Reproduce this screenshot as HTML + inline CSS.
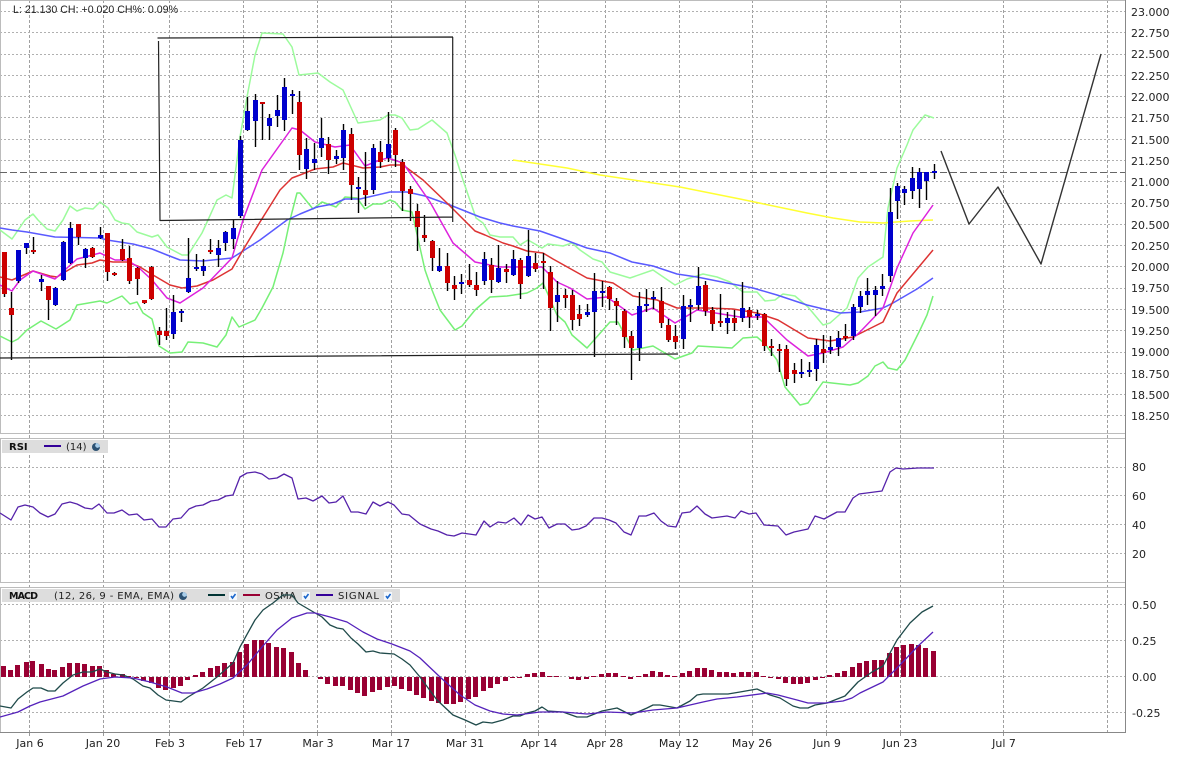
<!DOCTYPE html>
<html><head><meta charset="utf-8"><title>Chart</title>
<style>
html,body{margin:0;padding:0;background:#fff;width:1178px;height:757px;overflow:hidden}
svg{display:block}
text{font-family:"DejaVu Sans",sans-serif;font-size:11px;fill:#222}
.l{fill:none;stroke-linejoin:round}
</style></head><body>
<svg width="1178" height="757" viewBox="0 0 1178 757" xmlns="http://www.w3.org/2000/svg">
<rect width="1178" height="757" fill="#fff"/>
<!-- vertical grid -->
<path d="M29.5 0V732M103.5 0V732M169.5 0V732M243.5 0V732M317.5 0V732M391.5 0V732M465.5 0V732M538.5 0V732M605.5 0V732M679.5 0V732M752.5 0V732M826.5 0V732M900.5 0V732M1003.5 0V732M1107.5 0V732" stroke="#a0a0a0" stroke-dasharray="3 2" shape-rendering="crispEdges" fill="none"/>
<path d="M29.5 732V736M103.5 732V736M169.5 732V736M243.5 732V736M317.5 732V736M391.5 732V736M465.5 732V736M538.5 732V736M605.5 732V736M679.5 732V736M752.5 732V736M826.5 732V736M900.5 732V736M1003.5 732V736" stroke="#999" shape-rendering="crispEdges"/>
<!-- horizontal grid -->
<path d="M0 11.5H1125M0 32.5H1125M0 54.5H1125M0 75.5H1125M0 96.5H1125M0 117.5H1125M0 139.5H1125M0 160.5H1125M0 181.5H1125M0 203.5H1125M0 224.5H1125M0 245.5H1125M0 266.5H1125M0 288.5H1125M0 309.5H1125M0 330.5H1125M0 352.5H1125M0 373.5H1125M0 394.5H1125M0 415.5H1125M0 467.5H1125M0 495.5H1125M0 524.5H1125M0 553.5H1125M0 604.5H1125M0 640.5H1125M0 676.5H1125M0 712.5H1125" stroke="#b0b0b0" stroke-dasharray="2 2" shape-rendering="crispEdges" fill="none"/>
<!-- panel borders -->
<path d="M0 .5H1125M0 433.5H1125M0 438.5H1125M0 582.5H1125M0 587.5H1125M.5 0V433M.5 438V582M.5 587V732" stroke="#bcbcbc" shape-rendering="crispEdges" fill="none"/>
<path d="M0 732.5H1125.5M1125.5 0V733" stroke="#888" shape-rendering="crispEdges" fill="none"/>
<!-- price line -->
<path d="M0 172.5H1125" stroke="#666" stroke-dasharray="7 3" shape-rendering="crispEdges"/>
<!-- bollinger upper -->
<polyline class="l" stroke="#9cfb9c" stroke-width="1.5" points="0,230 12,239 25,220 33,214 38,220 47,229 55,231 63,220 70,206 77,211 85,208 93,209 100,202 108,208 115,220 122,223 129,224 137,232 152,237 158,235 167,247 182,255 188,255 202,233 208,220 217,200 226,195 232,198 240,137 247,97 255,55 262,33 283,34 292,47 299,75 318,73 330,82 343,90 358,123 380,120 388,115 395,115 402,118 410,130 418,129 432,120 447,133 455,155 463,180 476,218 483,223 490,235 500,237 513,237 520,245 528,240 542,248 548,244 563,246 572,243 580,250 593,259 602,262 610,272 630,278 653,270 675,285 687,279 703,274 717,277 730,282 743,292 757,292 765,301 775,300 783,294 795,296 808,307 823,325 830,323 847,308 858,278 868,267 883,257 888,208 897,168 907,145 913,130 925,115 934,118"/>
<!-- bollinger lower -->
<polyline class="l" stroke="#77f077" stroke-width="1.5" points="0,336 12,342 18,339 27,330 41,321 56,329 70,320 77,305 100,301 107,303 122,296 130,304 137,302 143,313 152,319 159,346 170,353 182,352 188,342 203,343 217,347 226,335 232,317 239,327 255,320 262,308 273,287 283,253 290,220 297,193 300,193 313,209 322,202 336,207 345,197 357,198 365,209 373,204 382,204 390,200 395,202 402,210 412,212 425,270 432,290 440,310 455,330 462,326 475,310 490,297 507,296 527,293 537,288 543,283 557,315 565,322 572,335 587,348 610,322 618,322 633,350 653,346 675,359 692,353 698,346 732,348 743,338 757,337 765,344 777,360 785,387 800,405 808,403 823,382 850,385 858,383 868,376 875,366 883,362 888,368 897,370 905,360 920,330 927,315 933,296"/>
<!-- yellow -->
<polyline class="l" stroke="#ffff33" stroke-width="1.5" points="513,160 540,164 567,168 600,175 680,187 740,199 783,208 807,213 833,218 860,222 883,223 910,221 933,220"/>
<!-- blue MA -->
<polyline class="l" stroke="#5a5aff" stroke-width="1.5" points="0,228 12,230 27,232 55,237 100,238 107,240 133,244 152,249 167,255 180,260 203,261 232,258 243,251 260,240 287,220 300,214 317,207 333,204 345,199 360,199 390,192 407,192 425,196 450,205 480,217 500,223 513,226 540,231 560,238 587,248 610,253 632,262 653,266 677,274 697,277 727,283 753,288 777,295 807,305 840,313 860,312 883,308 893,303 917,289 933,278"/>
<!-- red MA -->
<polyline class="l" stroke="#dd3333" stroke-width="1.5" points="0,277 12,280 33,271 50,276 57,277 65,272 77,265 92,263 100,260 113,262 127,262 140,267 153,275 170,285 182,288 197,286 213,280 232,269 243,250 260,222 280,190 292,178 300,175 315,169 333,167 343,163 363,168 380,167 390,165 403,165 423,180 447,203 475,231 485,235 503,243 513,246 527,251 543,253 553,259 587,278 613,283 633,296 657,300 677,308 707,308 733,309 757,313 778,320 808,338 830,341 853,337 883,322 897,293 933,250"/>
<!-- magenta MA -->
<polyline class="l" stroke="#dd22dd" stroke-width="1.5" points="0,285 12,291 20,280 33,271 55,279 67,268 77,259 85,257 100,253 115,260 127,260 138,267 152,280 167,298 180,303 203,288 232,258 243,220 262,170 292,128 300,130 315,142 335,147 350,145 365,166 380,160 388,158 403,163 430,202 453,243 475,262 500,267 542,267 557,282 570,288 587,299 607,297 632,315 653,308 675,323 697,310 740,317 763,317 787,340 808,356 823,353 843,347 860,332 883,308 897,268 913,233 933,205"/>
<!-- wicks -->
<path stroke="#000" stroke-width="1.4" fill="none" d="M4.5 252V297M11.5 292V360M18.5 250V283M26.5 243V254M33.5 237V254M41.5 275V291M48.5 286V320M55.5 287V306M63.5 241V281M70.5 222V264M78.5 224V245M85.5 248V268M92.5 247V258M100.5 227V239M107.5 233V281M114.5 272V276M122.5 239V261M129.5 246V284M137.5 267V295M144.5 300V304M151.5 266V300M159.5 327V345M166.5 308V340M173.5 295V339M181.5 309V322M188.5 238V293M196.5 254V271M203.5 259V276M210.5 239V254M218.5 240V267M225.5 231V251M233.5 220V249M240.5 136V218M247.5 97V131M255.5 94V147M262.5 102V140M269.5 114V140M277.5 95V127M284.5 78V131M292.5 90V114M299.5 91V170M306.5 138V179M314.5 143V170M321.5 118V157M328.5 137V174M336.5 150V164M343.5 124V170M351.5 128V200M358.5 177V213M365.5 152V206M373.5 144V194M380.5 141V168M388.5 112V162M395.5 128V167M402.5 159V211M410.5 186V221M417.5 204V251M424.5 215V242M432.5 240V271M439.5 248V272M447.5 253V291M454.5 276V300M461.5 274V294M469.5 264V287M476.5 272V296M484.5 252V285M491.5 258V293M498.5 245V283M506.5 264V283M513.5 250V276M520.5 258V299M528.5 230V277M535.5 253V272M543.5 253V289M550.5 266V331M557.5 281V322M565.5 289V308M572.5 290V330M579.5 305V326M587.5 304V317M594.5 273V357M602.5 281V307M609.5 286V310M616.5 298V325M624.5 309V348M631.5 331V380M639.5 292V361M646.5 289V312M653.5 291V309M661.5 287V328M668.5 319V342M675.5 325V349M683.5 295V349M690.5 299V322M698.5 267V310M705.5 281V316M712.5 307V331M720.5 294V327M727.5 312V334M734.5 310V331M742.5 282V322M749.5 307V328M757.5 310V320M764.5 313V351M771.5 339V356M779.5 344V372M786.5 345V386M794.5 363V383M801.5 359V378M809.5 362V377M816.5 339V381M823.5 335V363M830.5 336V354M838.5 331V356M845.5 324V341M853.5 304V340M860.5 291V313M867.5 278V305M875.5 286V316M882.5 274V296M890.5 188V282M897.5 183V219M904.5 186V205M912.5 167V199M919.5 168V208M926.5 172V200M934.5 164V179"/>
<!-- red bodies -->
<path shape-rendering="crispEdges" fill="#cc0000" d="M2 252h5V294h-5zM9 308h5V315h-5zM31 250h5V252h-5zM46 286h5V300h-5zM76 224h5V237h-5zM90 248h5V257h-5zM105 233h5V272h-5zM112 273h5V275h-5zM120 249h5V260h-5zM127 258h5V281h-5zM135 268h5V279h-5zM142 300h5V303h-5zM149 267h5V299h-5zM157 331h5V335h-5zM164 331h5V336h-5zM208 250h5V252h-5zM260 102h5V104h-5zM297 102h5V155h-5zM326 144h5V160h-5zM349 134h5V185h-5zM363 190h5V195h-5zM378 152h5V162h-5zM393 130h5V155h-5zM400 162h5V191h-5zM408 189h5V194h-5zM415 211h5V227h-5zM422 235h5V238h-5zM430 241h5V258h-5zM445 266h5V283h-5zM452 285h5V289h-5zM467 280h5V285h-5zM474 285h5V290h-5zM489 265h5V280h-5zM504 269h5V272h-5zM518 260h5V284h-5zM533 263h5V269h-5zM541 261h5V263h-5zM548 272h5V308h-5zM563 295h5V298h-5zM570 295h5V320h-5zM577 314h5V319h-5zM607 287h5V299h-5zM614 301h5V306h-5zM622 311h5V337h-5zM629 336h5V348h-5zM659 301h5V323h-5zM666 325h5V340h-5zM673 336h5V342h-5zM703 285h5V311h-5zM710 310h5V324h-5zM718 321h5V323h-5zM732 318h5V323h-5zM747 310h5V317h-5zM762 314h5V346h-5zM769 346h5V348h-5zM777 349h5V351h-5zM784 349h5V379h-5zM792 370h5V374h-5zM821 349h5V353h-5zM843 336h5V338h-5z"/>
<!-- blue bodies -->
<path shape-rendering="crispEdges" fill="#0000cc" d="M16 250h5V281h-5zM24 243h5V248h-5zM39 279h5V282h-5zM53 288h5V305h-5zM61 242h5V280h-5zM68 228h5V263h-5zM83 249h5V258h-5zM98 235h5V238h-5zM171 312h5V334h-5zM179 311h5V313h-5zM186 278h5V292h-5zM194 267h5V269h-5zM201 266h5V271h-5zM216 248h5V255h-5zM223 232h5V243h-5zM231 228h5V239h-5zM238 140h5V216h-5zM245 111h5V130h-5zM253 100h5V121h-5zM267 118h5V126h-5zM275 110h5V116h-5zM282 87h5V120h-5zM290 94h5V96h-5zM304 149h5V169h-5zM312 159h5V163h-5zM319 138h5V148h-5zM334 156h5V159h-5zM341 130h5V158h-5zM356 187h5V189h-5zM371 148h5V190h-5zM386 144h5V158h-5zM437 266h5V271h-5zM459 282h5V284h-5zM482 259h5V281h-5zM496 268h5V282h-5zM511 259h5V275h-5zM526 256h5V276h-5zM555 295h5V302h-5zM585 312h5V315h-5zM592 291h5V312h-5zM600 291h5V293h-5zM637 306h5V348h-5zM644 304h5V306h-5zM651 297h5V299h-5zM681 306h5V339h-5zM688 305h5V307h-5zM696 286h5V305h-5zM725 318h5V323h-5zM740 308h5V318h-5zM755 314h5V316h-5zM799 372h5V374h-5zM807 370h5V372h-5zM814 345h5V369h-5zM828 347h5V350h-5zM836 338h5V347h-5zM851 307h5V336h-5zM858 296h5V307h-5zM865 291h5V295h-5zM873 290h5V295h-5zM880 286h5V289h-5zM888 212h5V276h-5zM895 186h5V201h-5zM902 189h5V193h-5zM910 178h5V191h-5zM917 172h5V189h-5zM924 172h5V181h-5zM932 171h5V173h-5z"/>
<!-- trend lines -->
<path fill="none" stroke="#222" stroke-width="1.2" d="M157.5 38L453 37M158.5 41L160 221M160 220.5L453 217M452.7 37V222M0 358L678 354"/>
<polyline class="l" stroke="#333" stroke-width="1.4" points="941,151 969,224 998,187 1041,264 1101,54"/>
<!-- header -->
<text x="13" y="13" textLength="165" style="font-family:'Liberation Sans',sans-serif;font-size:10.6px">L: 21.130 CH: +0.020 CH%: 0.09%</text>
<!-- price labels -->
<text x="1131" y="16">23.000</text><text x="1131" y="37">22.750</text><text x="1131" y="58">22.500</text><text x="1131" y="80">22.250</text><text x="1131" y="101">22.000</text><text x="1131" y="122">21.750</text><text x="1131" y="144">21.500</text><text x="1131" y="165">21.250</text><text x="1131" y="186">21.000</text><text x="1131" y="207">20.750</text><text x="1131" y="229">20.500</text><text x="1131" y="250">20.250</text><text x="1131" y="271">20.000</text><text x="1131" y="292">19.750</text><text x="1131" y="314">19.500</text><text x="1131" y="335">19.250</text><text x="1131" y="356">19.000</text><text x="1131" y="378">18.750</text><text x="1131" y="399">18.500</text><text x="1131" y="420">18.250</text>
<text x="1132" y="471">80</text><text x="1132" y="500">60</text><text x="1132" y="529">40</text><text x="1132" y="558">20</text>
<text x="1132" y="609">0.50</text><text x="1132" y="645">0.25</text><text x="1132" y="681">0.00</text><text x="1132" y="717">-0.25</text>
<!-- date labels -->
<g text-anchor="middle"><text x="30" y="747">Jan 6</text><text x="103" y="747">Jan 20</text><text x="170" y="747">Feb 3</text><text x="244" y="747">Feb 17</text><text x="318" y="747">Mar 3</text><text x="391" y="747">Mar 17</text><text x="465" y="747">Mar 31</text><text x="539" y="747">Apr 14</text><text x="605" y="747">Apr 28</text><text x="679" y="747">May 12</text><text x="752" y="747">May 26</text><text x="827" y="747">Jun 9</text><text x="900" y="747">Jun 23</text><text x="1004" y="747">Jul 7</text></g>
<!-- RSI legend -->
<rect x="2" y="440" width="106" height="13" fill="#dddddd"/>
<text x="9" y="450" style="font-size:10px;font-weight:bold;fill:#111">RSI</text>
<path d="M44 446H61" stroke="#330099" stroke-width="2"/>
<text x="66" y="450" style="font-size:10px">(14)</text>
<circle cx="96" cy="447" r="4" fill="#2d5273"/><path d="M96 443a4 4 0 0 1 4 4l-3 1-2-2z" fill="#a8cdea"/>
<!-- RSI line -->
<polyline class="l" stroke="#5522aa" stroke-width="1.3" points="0,513 11,520 18,507 25,505 33,507 40,513 48,517 55,514 62,504 70,502 77,504 85,508 92,509 99,504 107,513 114,513 122,510 129,515 137,514 144,520 152,519 159,527 166,527 173,519 181,518 189,509 196,506 203,505 211,501 218,500 226,496 233,495 240,477 247,473 255,472 262,474 269,479 277,478 284,474 292,478 298,499 306,498 313,501 322,496 329,503 336,502 343,496 351,512 358,512 366,514 373,502 380,506 388,502 394,505 402,514 409,515 420,524 431,529 438,531 447,535 454,536 462,533 476,535 484,521 490,527 498,522 506,523 514,518 521,525 528,515 535,519 542,517 549,528 557,524 565,524 572,530 579,529 586,526 594,518 602,518 609,520 616,523 624,532 631,535 639,516 646,516 654,513 661,521 668,526 676,527 682,513 690,512 697,506 705,514 712,518 727,516 735,518 741,511 749,514 756,513 764,525 778,526 786,535 794,532 808,529 815,516 824,519 837,512 845,512 853,498 859,494 882,491 890,472 896,468 903,469 918,468 934,468"/>
<!-- MACD legend -->
<rect x="2" y="589" width="398" height="13" fill="#dddddd"/>
<text x="9" y="599" textLength="29" style="font-size:9.5px;font-weight:bold;fill:#111">MACD</text>
<text x="54" y="599" textLength="120" style="font-size:10px">(12, 26, 9 - EMA, EMA)</text>
<circle cx="183" cy="596" r="4" fill="#2d5273"/><path d="M183 592a4 4 0 0 1 4 4l-3 1-2-2z" fill="#a8cdea"/>
<path d="M208 595H225" stroke="#003333" stroke-width="2"/>
<path d="M243 595H260" stroke="#990033" stroke-width="2"/>
<path d="M316 595H333" stroke="#330099" stroke-width="2"/>
<text x="265" y="599" textLength="31" style="font-size:10px">OSMA</text>
<text x="338" y="599" textLength="41" style="font-size:10px">SIGNAL</text>
<g fill="#f4f8fc"><rect x="229" y="592" width="8" height="8"/><rect x="302" y="592" width="8" height="8"/><rect x="384" y="592" width="8" height="8"/></g>
<path d="M231 596l1.5 2 3-4M304 596l1.5 2 3-4M386 596l1.5 2 3-4" fill="none" stroke="#1a66cc" stroke-width="1.6"/>
<!-- OSMA bars -->
<path shape-rendering="crispEdges" fill="#990033" d="M1 666h5V677h-5zM8 670h5V677h-5zM15 665h5V677h-5zM24 662h5V677h-5zM30 661h5V677h-5zM39 664h5V677h-5zM46 669h5V677h-5zM52 670h5V677h-5zM60 667h5V677h-5zM67 663h5V677h-5zM75 663h5V677h-5zM82 664h5V677h-5zM90 666h5V677h-5zM97 666h5V677h-5zM104 670h5V677h-5zM111 674h5V677h-5zM120 674h5V677h-5zM126 676h5V677h-5zM134 677h5V678h-5zM141 677h5V681h-5zM149 677h5V683h-5zM156 677h5V688h-5zM163 677h5V690h-5zM171 677h5V688h-5zM178 677h5V686h-5zM185 677h5V680h-5zM193 675h5V677h-5zM200 672h5V677h-5zM208 668h5V677h-5zM215 666h5V677h-5zM222 663h5V677h-5zM230 662h5V677h-5zM237 652h5V677h-5zM244 644h5V677h-5zM252 640h5V677h-5zM259 640h5V677h-5zM266 643h5V677h-5zM274 647h5V677h-5zM281 648h5V677h-5zM289 652h5V677h-5zM296 663h5V677h-5zM303 670h5V677h-5zM318 677h5V679h-5zM325 677h5V684h-5zM333 677h5V686h-5zM340 677h5V686h-5zM348 677h5V690h-5zM355 677h5V693h-5zM362 677h5V696h-5zM370 677h5V692h-5zM377 677h5V690h-5zM385 677h5V687h-5zM392 677h5V686h-5zM399 677h5V689h-5zM407 677h5V691h-5zM414 677h5V695h-5zM421 677h5V698h-5zM429 677h5V701h-5zM436 677h5V703h-5zM444 677h5V704h-5zM451 677h5V704h-5zM458 677h5V702h-5zM466 677h5V699h-5zM473 677h5V697h-5zM481 677h5V691h-5zM488 677h5V688h-5zM495 677h5V684h-5zM503 677h5V681h-5zM510 677h5V678h-5zM517 677h5V678h-5zM525 674h5V677h-5zM532 673h5V677h-5zM540 672h5V677h-5zM547 676h5V677h-5zM554 676h5V677h-5zM569 677h5V679h-5zM576 677h5V680h-5zM584 677h5V679h-5zM591 676h5V677h-5zM599 674h5V677h-5zM606 673h5V677h-5zM613 673h5V677h-5zM621 676h5V677h-5zM628 677h5V679h-5zM636 676h5V677h-5zM643 674h5V677h-5zM650 671h5V677h-5zM658 672h5V677h-5zM665 675h5V677h-5zM672 676h5V677h-5zM680 673h5V677h-5zM687 671h5V677h-5zM695 668h5V677h-5zM702 668h5V677h-5zM709 670h5V677h-5zM717 672h5V677h-5zM724 672h5V677h-5zM731 673h5V677h-5zM739 672h5V677h-5zM746 672h5V677h-5zM754 672h5V677h-5zM761 676h5V677h-5zM768 677h5V678h-5zM776 677h5V679h-5zM783 677h5V683h-5zM791 677h5V684h-5zM798 677h5V684h-5zM805 677h5V683h-5zM813 677h5V680h-5zM820 677h5V678h-5zM827 675h5V677h-5zM835 673h5V677h-5zM842 671h5V677h-5zM850 667h5V677h-5zM857 663h5V677h-5zM864 661h5V677h-5zM872 660h5V677h-5zM879 660h5V677h-5zM887 653h5V677h-5zM894 647h5V677h-5zM901 645h5V677h-5zM909 644h5V677h-5zM916 645h5V677h-5zM923 648h5V677h-5zM931 651h5V677h-5z"/>
<!-- MACD line -->
<polyline class="l" stroke="#1f4a4a" stroke-width="1.3" points="0,706 11,708 18,699 27,692 33,688 41,688 48,691 55,691 63,683 73,675 83,672 92,672 100,669 107,672 115,674 123,675 133,679 143,686 150,688 158,695 166,700 181,702 188,697 203,688 217,677 233,663 240,647 255,620 263,610 273,603 283,595 292,595 298,603 322,617 330,625 337,628 343,629 351,638 358,644 366,652 373,651 380,653 394,654 402,659 410,665 420,677 437,700 453,715 465,720 476,725 483,722 492,723 503,720 513,716 520,716 527,713 535,711 542,707 548,711 563,712 577,717 587,717 602,711 617,708 631,715 647,708 653,705 660,705 677,708 690,701 697,695 703,694 728,694 740,692 757,689 770,695 780,698 793,706 800,708 808,708 815,705 827,703 845,696 858,682 872,672 883,666 897,640 910,623 922,612 933,606"/>
<!-- Signal line -->
<polyline class="l" stroke="#5522bb" stroke-width="1.3" points="0,717 18,712 30,706 40,702 63,696 83,686 100,679 115,677 133,678 150,682 167,687 182,693 193,693 207,689 220,684 233,678 247,665 262,647 277,630 292,618 307,613 315,613 330,617 347,622 363,632 377,639 392,644 410,651 420,658 440,677 460,695 475,705 490,711 503,714 517,715 540,712 563,712 587,714 607,712 633,713 653,710 677,708 703,702 717,699 737,697 767,693 778,695 797,700 808,703 825,703 843,701 852,698 860,693 883,682 900,665 917,647 933,632"/>
</svg>
</body></html>
